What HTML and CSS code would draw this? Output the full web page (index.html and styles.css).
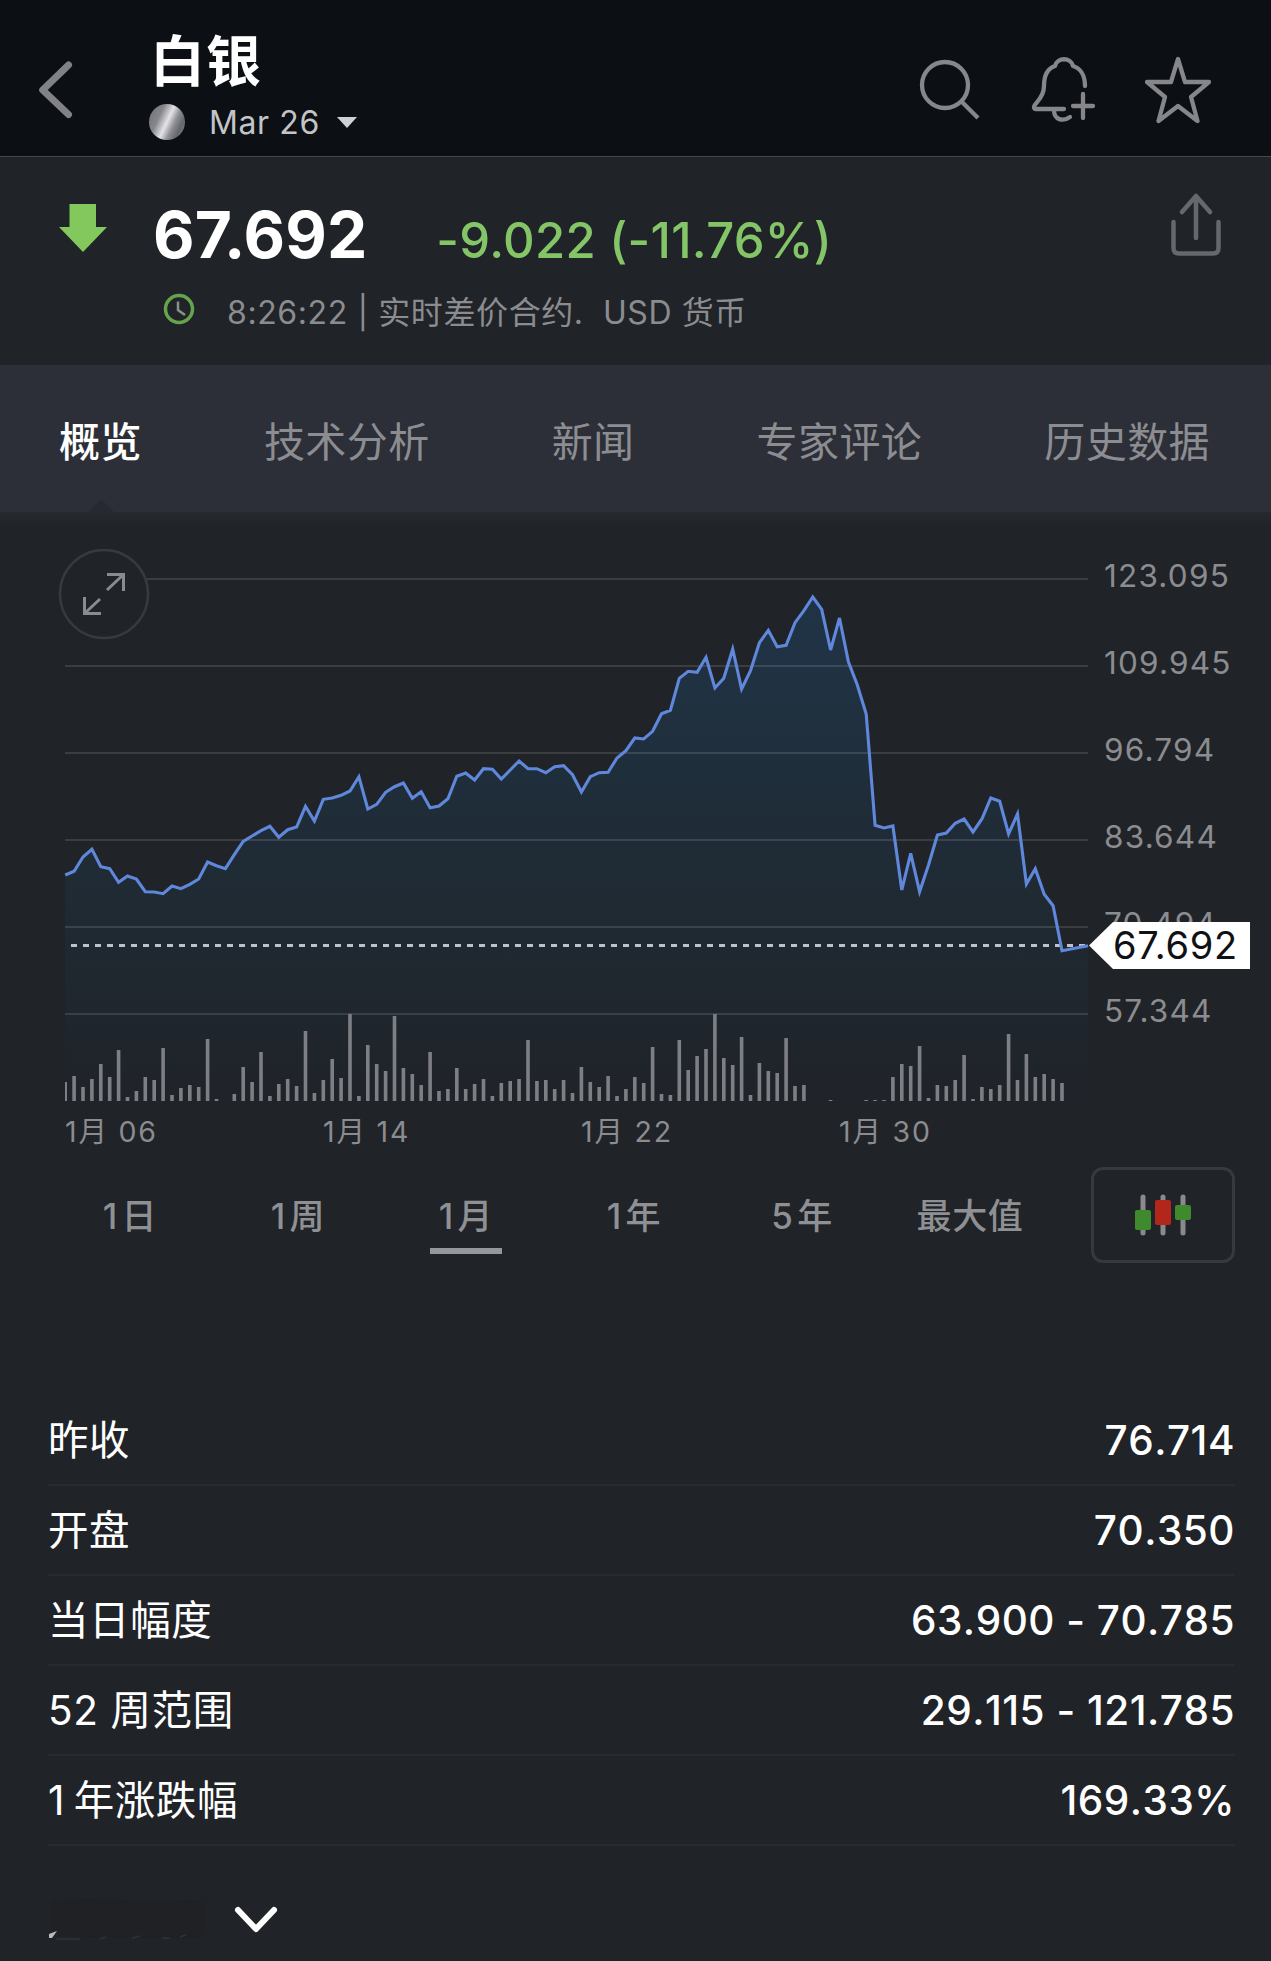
FILE: index.html
```
<!DOCTYPE html>
<html lang="zh-CN">

<head>
    <meta charset="UTF-8">
    <title>白银</title>
    <link rel="stylesheet" href="styles.css">
</head>

<body>
    <header>
        <svg class="back" width="40" height="76" viewBox="0 0 40 76"><path d="M33.500 13 L7.700 38 L33.500 62.500"/></svg>
        <div class="title">
            <h1>白银</h1>
            <div class="contract">
                <span class="coin"></span>
                <span class="month">Mar 26</span>
                <span class="caret"></span>
            </div>
        </div>
        <div class="actions">
            <svg width="64" height="70" viewBox="0 0 64 70">
                <circle cx="28" cy="29" r="23"/>
                <path d="M44 45 L61 62"/>
            </svg>
            <svg width="66" height="70" viewBox="0 0 66 70">
                <path class="round" d="M55 30 C55 19 50 12 43 10 C41 1 27 1 25 10 C16 13 14 21 14 30 C14 43 4 47 4 51 Q4 53 6 53 L34 53"/>
                <path class="round" d="M24 54 C24 64 33 66 40 61"/>
                <path class="round" d="M53 38 V62 M43 50 H63"/>
            </svg>
            <svg width="68" height="70" viewBox="0 0 68 70">
                <path class="round" d="M33 3 L40 26 L64 26 L46 41 L52.500 65 L33 50 L13.500 65 L20 41 L2 26 L26 26 Z"/>
            </svg>
        </div>
    </header>

    <section class="quote">
        <svg class="down" width="48" height="49" viewBox="0 0 48 49"><path d="M10.500 0 H37 V23 H48 L24 48 L0 23 H10.500 Z"/></svg>
        <div class="quoteInfo">
            <div class="quoteLine">
                <span class="price">67.692</span>
                <span class="change">-9.022 (-11.76%)</span>
            </div>
            <div class="timeLine">
                <svg width="32" height="32" viewBox="0 0 32 32">
                    <circle cx="16" cy="16" r="13.500"/>
                    <path d="M15 8.500 V17 L22 22"/>
                </svg>
                <span>8:26:22 | 实时差价合约.&nbsp; USD 货币</span>
            </div>
        </div>
        <svg class="share" width="50" height="66" viewBox="0 0 50 66">
            <path d="M2.500 29 V55 Q2.500 60.500 8 60.500 H42 Q47.500 60.500 47.500 55 V29"/>
            <path d="M25 45 V4 M11 19 L25 3 L39 19"/>
        </svg>
    </section>

    <nav>
        <a class="active">概览</a>
        <a>技术分析</a>
        <a>新闻</a>
        <a>专家评论</a>
        <a>历史数据</a>
    </nav>

    <!-- chart coordinates are page pixels, the chart starts at y = 512 -->
    <svg id="chart" width="1271" height="648" viewBox="0 512 1271 648">
        <defs>
            <linearGradient id="fill" x1="0" y1="596" x2="0" y2="1101" gradientUnits="userSpaceOnUse">
                <stop offset="0" stop-color="#203447"/>
                <stop offset="0.600" stop-color="#1f2a33"/>
                <stop offset="1" stop-color="#202329"/>
            </linearGradient>
            <clipPath id="plot"><rect x="65" y="560" width="1023" height="541"/></clipPath>
        </defs>
        <path id="area"/>
        <path class="grid" d="M65 579H1088M65 666H1088M65 753H1088M65 840H1088M65 927H1088M65 1014H1088"/>
        <path id="volume" clip-path="url(#plot)"/>
        <path class="dotted" d="M71 945.500H1088"/>
        <path id="line"/>
        <circle class="expandBg" cx="104" cy="594" r="44"/>
        <path class="expandIcon" d="M107 590 L124 574 M107 574.500 H123.500 V591 M100 599 L84 614 M84.500 597 V613.500 H101"/>
        <g class="axisY">
            <text x="1104" y="587">123.095</text>
            <text x="1104" y="674">109.945</text>
            <text x="1104" y="761">96.794</text>
            <text x="1104" y="848">83.644</text>
            <text x="1104" y="935">70.494</text>
            <text x="1104" y="1022">57.344</text>
        </g>
        <g class="axisX">
            <text x="65" y="1142">1月 06</text>
            <text x="323" y="1142">1月 14</text>
            <text x="581" y="1142">1月 22</text>
            <text x="839" y="1142">1月 30</text>
        </g>
        <path class="tag" d="M1089 945.500 L1113 922 H1250 V969 H1113 Z"/>
        <text class="tagText" x="1113" y="959">67.692</text>
    </svg>

    <div class="ranges">
        <a>1&#8202;日</a>
        <a>1&#8202;周</a>
        <a class="selected">1&#8202;月</a>
        <a>1&#8202;年</a>
        <a>5&#8202;年</a>
        <a>最大值</a>
        <button>
            <svg width="56" height="42" viewBox="0 0 56 42">
                <path d="M8 3 V39 M28 3 V39 M48 3 V39"/>
                <rect class="up" x="0" y="16" width="16" height="20" rx="2"/>
                <rect class="dn" x="20" y="6" width="16" height="25" rx="2"/>
                <rect class="up" x="40" y="11" width="16" height="15" rx="2"/>
            </svg>
        </button>
    </div>

    <div class="stats">
        <div class="row"><span>昨收</span><b>76.714</b></div>
        <div class="row"><span>开盘</span><b>70.350</b></div>
        <div class="row"><span>当日幅度</span><b>63.900 - 70.785</b></div>
        <div class="row"><span>52 周范围</span><b>29.115 - 121.785</b></div>
        <div class="row"><span>1&#8202;&#8202;年涨跌幅</span><b>169.33%</b></div>
    </div>

    <div class="more">
        <svg class="smudge" width="160" height="48" viewBox="0 0 160 48">
            <path class="dark" d="M2 4 L40 2 L100 4 L150 3 L158 8 L156 40 L110 41 L60 40 L10 39 L2 30 Z"/>
            <path class="faint" d="M8 42 H32 M52 42 L58 40 M84 41 L92 39 M114 41 H122 M132 40 L138 38"/>
            <path class="spot" d="M1 37 L9 34 L4 41 L1 41 Z"/>
        </svg>
        <svg class="chevron" width="46" height="36" viewBox="0 0 46 36"><path d="M5 7 L23 26 L41 7"/></svg>
    </div>

    <script src="script.js"></script>
</body>

</html>
```
FILE: styles.css
```
body {
    font-family: Inter, "Noto Sans CJK SC", sans-serif;
    margin: 0;
    padding: 0;
    background-color: #202327;
    color: #fff;
}

svg {
    display: block;
    fill: none;
    flex-shrink: 0;
}

header {
    box-sizing: border-box;
    height: 157px;
    display: flex;
    background-color: #0c0f14;
    border-bottom: 1px solid #45474b;
}

.back {
    margin: 52px 0 0 35px;
    stroke: #818286;
    stroke-width: 7;
    stroke-linecap: round;
    stroke-linejoin: round;
}

.title {
    margin-left: 75px;
}

h1 {
    margin: 30px 0 0;
    font-size: 55px;
    line-height: 62px;
    font-weight: 700;
    letter-spacing: 1px;
}

.contract {
    display: flex;
    align-items: center;
    height: 36px;
    margin: 12px 0 0 -1px;
}

.coin {
    width: 36px;
    height: 36px;
    border-radius: 50%;
    background: linear-gradient(115deg, #77787d 10%, #85868b 30%, #e4e4e6 50%, #8f9096 65%, #66676d 80%, #85868c 100%);
}

.month {
    margin-left: 24px;
    font-size: 32px;
    letter-spacing: 0.6px;
    color: #c3c4c7;
}

.caret {
    margin-left: 17px;
    border: 10.5px solid transparent;
    border-top: 11px solid #d0d1d4;
    border-bottom: 0;
}

.actions {
    display: flex;
    gap: 49px;
    margin: 56px 58px 0 auto;
    stroke: #86878b;
    stroke-width: 4.3;
}

.round {
    stroke-linecap: round;
    stroke-linejoin: round;
}

.quote {
    display: flex;
    height: 208px;
}

.down {
    margin: 47px 0 0 59px;
    fill: #83c85c;
}

.quoteInfo {
    margin-left: 46px;
    padding-top: 39px;
}

.quoteLine {
    display: flex;
    align-items: baseline;
    height: 80px;
}

.price {
    font-size: 64px;
    line-height: 78px;
    font-weight: 700;
    letter-spacing: 0.1px;
}

.change {
    margin-left: 69px;
    font-size: 49px;
    font-weight: 500;
    letter-spacing: 0.3px;
    color: #84c667;
}

.timeLine {
    display: flex;
    align-items: center;
    height: 46px;
    margin-top: 11px;
    font-size: 32px;
    letter-spacing: 0.6px;
    color: #8b8c90;
}

.timeLine svg {
    margin: -3px 32px 0 10px;
    stroke: #65a34c;
    stroke-width: 3.5;
}

.timeLine path {
    stroke: #85938a;
    stroke-width: 2.5;
}

.share {
    margin: 36px 50px 0 auto;
    stroke: #66686c;
    stroke-width: 4.5;
    stroke-linecap: round;
    stroke-linejoin: round;
}

nav {
    box-sizing: border-box;
    height: 147px;
    padding: 6px 61px 0 59px;
    display: flex;
    justify-content: space-between;
    align-items: center;
    background-color: #2d2f38;
}

nav a {
    position: relative;
    font-size: 41px;
    line-height: 60px;
    letter-spacing: 0.4px;
    color: #8c8d91;
}

nav .active {
    color: #fff;
    font-weight: 500;
}

nav .active::after {
    content: "";
    position: absolute;
    left: 29px;
    top: 87px;
    border: 13px solid transparent;
    border-bottom-color: #262930;
    border-top: 0;
}

#chart {
    font-family: Inter, "Noto Sans CJK SC", sans-serif;
    background: linear-gradient(#26292d, #202327 14px);
}

#area {
    fill: url(#fill);
}

.grid {
    stroke: rgba(255, 255, 255, 0.12);
    stroke-width: 2;
}

#volume {
    stroke: #7d7f84;
    stroke-width: 3.6;
}

.dotted {
    stroke: #bfc3c7;
    stroke-width: 3;
    stroke-dasharray: 6 6;
}

#line {
    stroke: #5f87dc;
    stroke-width: 3.1;
}

.expandBg {
    fill: #202327;
    stroke: #36393d;
    stroke-width: 2.5;
}

.expandIcon {
    stroke: #8a8b8e;
    stroke-width: 3;
}

.axisY text {
    font-size: 31.5px;
    letter-spacing: 1.2px;
    fill: #8b8c90;
}

.axisX text {
    font-size: 28.5px;
    letter-spacing: 1.8px;
    fill: #8b8c90;
}

.tag {
    fill: #fff;
}

.tagText {
    font-size: 38px;
    letter-spacing: 0.7px;
    fill: #101114;
}

.ranges {
    display: flex;
    height: 102px;
    padding: 7px 36px 0 46px;
}

.ranges a {
    width: 168px;
    padding-top: 29px;
    box-sizing: border-box;
    text-align: center;
    font-size: 35px;
    line-height: 40px;
    font-weight: 500;
    letter-spacing: 0.6px;
    color: #8f9094;
}

.ranges .selected::after {
    content: "";
    display: block;
    width: 72px;
    height: 6px;
    margin: 12px auto 0;
    background-color: #96979a;
}

.ranges button {
    display: flex;
    align-items: center;
    justify-content: center;
    width: 144px;
    height: 96px;
    margin-left: auto;
    padding: 0 1px 0 0;
    background: none;
    border: 3px solid #36393d;
    border-radius: 12px;
}

.ranges button path {
    stroke: #8a8a8c;
    stroke-width: 5;
    stroke-linecap: round;
}

.up {
    fill: #3f8a2c;
}

.dn {
    fill: #b3261c;
}

.stats {
    margin: 127px 36px 0 48px;
}

.row {
    display: flex;
    justify-content: space-between;
    align-items: center;
    box-sizing: border-box;
    height: 90px;
    padding-top: 2px;
    border-bottom: 2px solid #282b2f;
    font-size: 40.5px;
    line-height: 60px;
    letter-spacing: 0.6px;
}

.row b {
    font-size: 40.5px;
    font-weight: 500;
    letter-spacing: 0.5px;
    font-kerning: none;
}

.more {
    display: flex;
    margin: 51px 0 0 48px;
}

.dark {
    fill: #1f2124;
}

.faint {
    stroke: #303336;
    stroke-width: 1.5;
}

.spot {
    fill: #b9bbbe;
}

.chevron {
    margin: 6px 0 0 25px;
    stroke: #fff;
    stroke-width: 6;
    stroke-linecap: round;
    stroke-linejoin: round;
}
```
FILE: script.js
```
let prices = [875, 871.3, 857, 849.3, 866.7, 868.7, 882.3, 876, 879, 891.7, 892, 893.7, 886, 888.7, 884.3, 879,
    862, 865.7, 868.7, 854.7, 841.3, 836, 830.7, 826.3, 837.3, 829.7, 827, 806.3, 821, 799.3, 798, 795.3,
    791, 776.7, 809, 804.3, 792.3, 786.7, 783, 798.3, 791.7, 807.7, 806, 798.7, 776.3, 773, 780, 768.7,
    769.3, 779, 770, 761, 768.7, 768.7, 772.7, 766.7, 765.7, 774.7, 792, 776.7, 772.7, 772.3, 758, 750.7,
    738, 739, 731.3, 713.7, 710.3, 678.3, 671.3, 672.3, 657.3, 688, 678.3, 649, 689, 670.7, 642.7, 630.3,
    646.7, 645.3, 622.7, 610.7, 597, 609.3, 650, 618, 661.7, 685, 714, 825.3, 828, 826, 890, 853.3,
    891.7, 865, 835, 833, 823.3, 819, 832, 819, 798, 801.3, 834, 814, 884, 868.7, 894.3, 905.7, 950.7];

let volumes = [19, 25, 14, 22, 37, 24, 51, 4, 10, 24, 21, 53, 6, 13, 16, 14, 62, 2, 0, 7, 34, 19, 49, 5, 17, 22,
    15, 70, 8, 21, 42, 23, 87, 5, 56, 37, 30, 85, 33, 27, 16, 49, 10, 12, 33, 12, 17, 22, 5, 18, 20, 22, 61, 20,
    21, 12, 21, 8, 34, 19, 14, 25, 5, 12, 24, 18, 54, 7, 6, 61, 31, 45, 52, 87, 43, 36, 64, 6, 38, 30, 28, 63,
    15, 16, 0, 0, 1, 0, 0, 0, 1, 1, 1, 24, 37, 35, 55, 3, 16, 15, 21, 46, 2, 14, 12, 16, 67, 21, 47, 24, 27, 22, 18];

let left = 65.2;
let step = 8.9;
let bottom = 1101;

let points = prices.map((y, i) => `${(left + i * step).toFixed(1)} ${y}`);
points.push("1088 945.7");

let line = "M" + points.join("L");
document.getElementById("line").setAttribute("d", line);
document.getElementById("area").setAttribute("d", `${line}V${bottom}H${left}Z`);

let bars = volumes.map((v, i) => v ? `M${(left + i * step).toFixed(1)} ${bottom}v${-v}` : "");
document.getElementById("volume").setAttribute("d", bars.join(""));
```
